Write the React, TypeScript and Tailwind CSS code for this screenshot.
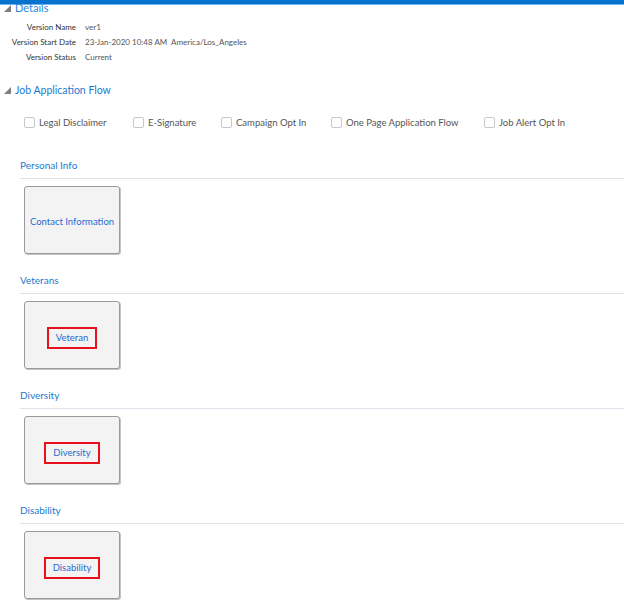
import React from "react";

const font = { fontFamily: 'Lato, "Noto Sans", sans-serif' };

function Tri() {
  return (
    <svg width="7" height="7" viewBox="0 0 7 7" className="shrink-0">
      <polygon points="7,0 7,7 0,7" fill="#7f7f7f" />
    </svg>
  );
}

function Check({ label, w }: { label: string; w: string }) {
  return (
    <div className={`flex items-center gap-[4px] ${w}`}>
      <div className="w-[11px] h-[11px] border border-[#c8c8c8] rounded-[2px] bg-white shrink-0" />
      <span className="text-[9.5px] text-[#555] whitespace-nowrap">{label}</span>
    </div>
  );
}

function Section({ title, item, red }: { title: string; item: string; red?: boolean }) {
  return (
    <div className="pl-[20px]">
      <div className="text-[10px] text-[#1a7ad0] h-[20px] leading-[20px]">{title}</div>
      <div className="h-px bg-[#dde3ea] mt-[3px]" />
      <div className="pl-[4px] pt-[7px]">
        <div
          className={`w-[96px] h-[68px] bg-[#f3f3f3] border border-[#9a9a9a] rounded-[3px] shadow-[1px_1px_0_#c4c4c4] flex items-center justify-center ${
            red ? "pt-[6px]" : "pt-[4px]"
          }`}
        >
          {red ? (
            <span className="border-2 border-[#e8101c] px-[7px] h-[22px] flex items-center text-[9.5px] text-[#2a6ad0]">
              {item}
            </span>
          ) : (
            <span className="text-[9.5px] text-[#2a6ad0]">{item}</span>
          )}
        </div>
      </div>
    </div>
  );
}

export default function App() {
  return (
    <div className="w-[624px] h-[600px] bg-white overflow-hidden relative" style={font}>
      <div className="h-[4px] bg-[#0572ce]" />
      <div className="h-px bg-[#6fb0e8]" />
      <div className="flex items-center gap-[4px] pl-[4px] -mt-[3px] h-[12px]">
        <Tri />
        <span className="text-[11px] text-[#2a8ae0] leading-[12px]">Details</span>
      </div>
      <div className="mt-[7px] flex flex-col gap-[3px] text-[8px] leading-[12px]">
        {[
          ["Version Name", "ver1"],
          ["Version Start Date", "23-Jan-2020 10:48 AM  America/Los_Angeles"],
          ["Version Status", "Current"],
        ].map(([k, v]) => (
          <div key={k} className="flex">
            <div className="w-[76px] text-right text-[#333] whitespace-nowrap">{k}</div>
            <div className="pl-[9px] text-[#555] whitespace-pre">{v}</div>
          </div>
        ))}
      </div>
      <div className="flex items-center gap-[4px] pl-[4px] mt-[20px]">
        <Tri />
        <span className="text-[10.5px] text-[#1a7ad0]">Job Application Flow</span>
      </div>
      <div className="flex pl-[24px] mt-[17px]">
        <Check label="Legal Disclaimer" w="w-[109px]" />
        <Check label="E-Signature" w="w-[88px]" />
        <Check label="Campaign Opt In" w="w-[110px]" />
        <Check label="One Page Application Flow" w="w-[153px]" />
        <Check label="Job Alert Opt In" w="w-[100px]" />
      </div>
      <div className="mt-[25px] flex flex-col gap-[16px]">
        <Section title="Personal Info" item="Contact Information" />
        <Section title="Veterans" item="Veteran" red />
        <Section title="Diversity" item="Diversity" red />
        <Section title="Disability" item="Disability" red />
      </div>
    </div>
  );
}
